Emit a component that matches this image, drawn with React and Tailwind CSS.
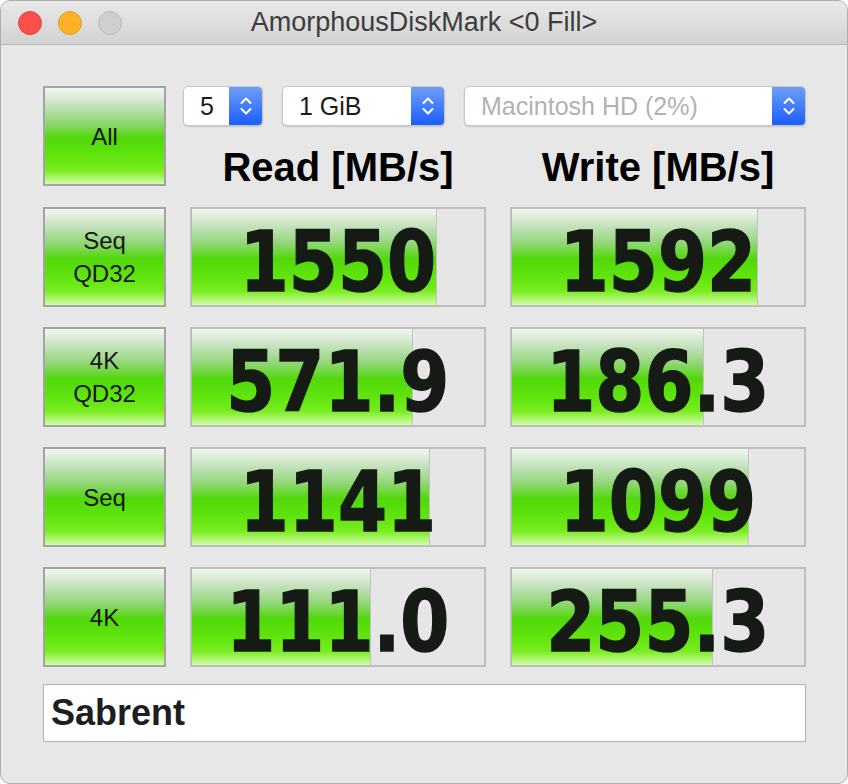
import React from "react";

const greenBar =
    "bg-[linear-gradient(to_bottom,#f3f6f2_0%,#c4e2bc_18%,#93d67a_35%,#52d80a_52%,#5fe40e_70%,#76ec1c_85%,#d4fcab_100%)]";

const rows = [
    { label: ["Seq", "QD32"], read: "1550", readFill: 245, write: "1592", writeFill: 246 },
    { label: ["4K", "QD32"], read: "571.9", readFill: 221, write: "186.3", writeFill: 192 },
    { label: ["Seq"], read: "1141", readFill: 238, write: "1099", writeFill: 237 },
    { label: ["4K"], read: "111.0", readFill: 179, write: "255.3", writeFill: 201 },
];

function Chevrons() {
    return (
        <svg width="14" height="26" viewBox="0 0 14 26" fill="none">
            <path d="M2.5 10 L7 5.5 L11.5 10" stroke="white" strokeWidth="2" strokeLinecap="round" strokeLinejoin="round" />
            <path d="M2.5 16 L7 20.5 L11.5 16" stroke="white" strokeWidth="2" strokeLinecap="round" strokeLinejoin="round" />
        </svg>
    );
}

function Popup({ width, children, muted }) {
    return (
        <div
            className="h-[40px] flex items-stretch bg-white border border-[#c6c6c6] rounded-[5px] shadow-[0_1px_1.5px_rgba(0,0,0,0.15)] overflow-hidden"
            style={{ width }}
        >
            <div
                className={`flex-1 flex items-center pl-4 text-[25px] leading-none ${
                    muted ? "text-[#b2b2b2]" : "text-[#1c1c1c]"
                }`}
            >
                {children}
            </div>
            <div className="w-[33px] flex items-center justify-center bg-[linear-gradient(to_bottom,#6d9ff8,#1b5efb)]">
                <Chevrons />
            </div>
        </div>
    );
}

function GreenButton({ lines }) {
    return (
        <div
            className={`h-[100px] border-2 border-[#a4a4a4] ${greenBar} flex flex-col items-center justify-center text-[24px] leading-[33px] text-[#151515]`}
        >
            {lines.map((l) => (
                <span key={l}>{l}</span>
            ))}
        </div>
    );
}

function Meter({ value, fill }) {
    return (
        <div className="relative h-[100px] border-2 border-[#bebebe] bg-[#e6e6e6]">
            <div
                className={`h-full ${greenBar} border-r border-[#c2c2c2]`}
                style={{ width: fill }}
            />
            <div className="absolute inset-0 flex items-center justify-center pt-[9px]">
                <span className="font-['DejaVu_Sans',sans-serif] font-bold text-[84px] leading-none text-[#161a15] [-webkit-text-stroke:1.5px_#161a15] scale-x-[0.84]">
                    {value}
                </span>
            </div>
        </div>
    );
}

export default function App() {
    return (
        <div className="w-[848px] h-[784px] bg-white font-['Liberation_Sans',Arial,sans-serif]">
            <div className="w-full h-full flex flex-col border border-[#adadad] rounded-[10px] overflow-hidden bg-[#e7e7e7]">
                {/* title bar */}
                <div className="h-[44px] shrink-0 grid grid-cols-[1fr_auto_1fr] items-center border-b border-[#b6b6b6] bg-[linear-gradient(to_bottom,#e9e9e9,#d2d2d2)]">
                    <div className="flex items-center gap-[16px] pl-[17px]">
                        <div className="w-[24px] h-[24px] rounded-full bg-[#fc4f4a] border border-[#e0433e]" />
                        <div className="w-[24px] h-[24px] rounded-full bg-[#fdb126] border border-[#dfa022]" />
                        <div className="w-[24px] h-[24px] rounded-full bg-[#cfcfcf] border border-[#b9b9b9]" />
                    </div>
                    <div className="text-[27px] text-[#3d3d3d] leading-none">AmorphousDiskMark &lt;0 Fill&gt;</div>
                    <div />
                </div>

                {/* content */}
                <div className="pl-[42px] pt-[41px]">
                    <div className="grid grid-cols-[123px_296px_296px] gap-x-[24px] gap-y-[20px]">
                        <GreenButton lines={["All"]} />
                        <div className="col-span-2 flex flex-col">
                            <div className="flex gap-[19px] -ml-[7px]">
                                <Popup width={80}>5</Popup>
                                <Popup width={163}>1 GiB</Popup>
                                <Popup width={342} muted>
                                    Macintosh HD (2%)
                                </Popup>
                            </div>
                            <div className="grid grid-cols-2 gap-x-[24px] mt-[21px] font-bold text-[40px] leading-none text-black">
                                <div className="text-center">Read [MB/s]</div>
                                <div className="text-center">Write [MB/s]</div>
                            </div>
                        </div>

                        {rows.map((r) => (
                            <React.Fragment key={r.read}>
                                <GreenButton lines={r.label} />
                                <Meter value={r.read} fill={r.readFill} />
                                <Meter value={r.write} fill={r.writeFill} />
                            </React.Fragment>
                        ))}
                    </div>

                    <div className="mt-[17px] w-[763px] h-[58px] bg-white border border-[#b2b2b2] flex items-center pl-[7px] text-[36px] font-bold text-[#1e1e1e]">
                        Sabrent
                    </div>
                </div>
            </div>
        </div>
    );
}
